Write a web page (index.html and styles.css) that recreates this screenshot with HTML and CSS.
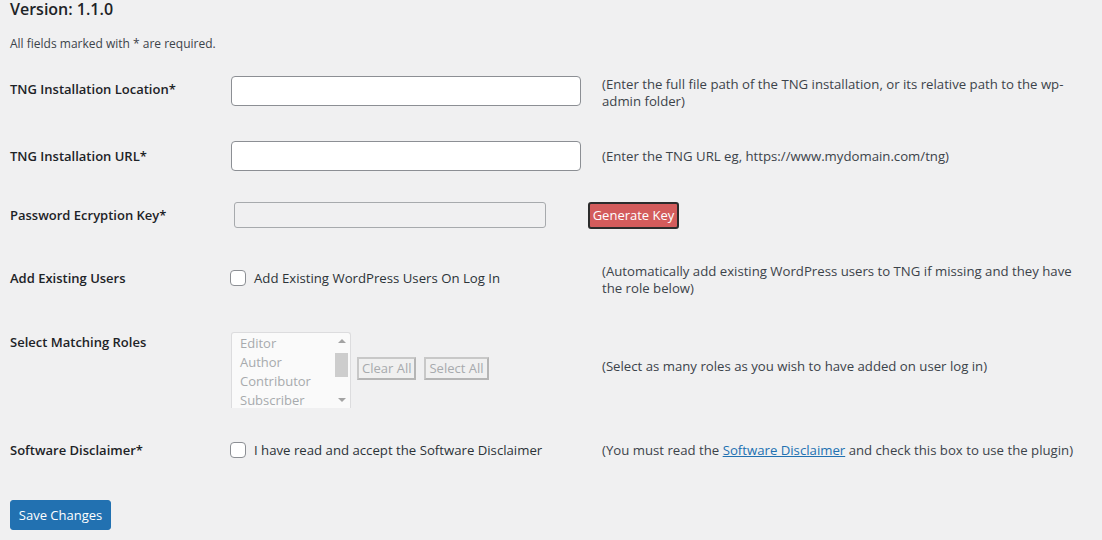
FILE: index.html
```html
<!DOCTYPE html>
<html>
<head>
<meta charset="utf-8">
<link rel="stylesheet" href="styles.css">
</head>
<body>
<div class="wrap">
  <h2 class="version">Version: 1.1.0</h2>
  <p class="required">All fields marked with * are required.</p>
  <div class="form">
    <div class="label r1">TNG Installation Location*</div>
    <div class="field"><input class="text" type="text"></div>
    <div class="desc two">(Enter the full file path of the TNG installation, or its relative path to the wp-admin folder)</div>

    <div class="label">TNG Installation URL*</div>
    <div class="field"><input class="text" type="text"></div>
    <div class="desc">(Enter the TNG URL eg, https://www.mydomain.com/tng)</div>

    <div class="label">Password Ecryption Key*</div>
    <div class="field keyfield"><input class="text key" type="text" disabled><button class="gen" type="button">Generate Key</button></div>
    <div class="desc"></div>

    <div class="label">Add Existing Users</div>
    <div class="field"><label class="check"><span class="box"></span>Add Existing WordPress Users On Log In</label></div>
    <div class="desc two">(Automatically add existing WordPress users to TNG if missing and they have the role below)</div>

    <div class="label top">Select Matching Roles</div>
    <div class="field roles">
      <div class="listbox">
        <div class="items">
          <div>Editor</div>
          <div>Author</div>
          <div>Contributor</div>
          <div>Subscriber</div>
        </div>
        <div class="scroll">
          <span class="arrow up"></span>
          <span class="thumb"></span>
          <span class="arrow down"></span>
        </div>
      </div>
      <button class="small" type="button">Clear All</button>
      <button class="small" type="button">Select All</button>
    </div>
    <div class="desc up">(Select as many roles as you wish to have added on user log in)</div>

    <div class="label">Software Disclaimer*</div>
    <div class="field"><label class="check"><span class="box"></span>I have read and accept the Software Disclaimer</label></div>
    <div class="desc">(You must read the <a href="#">Software Disclaimer</a> and check this box to use the plugin)</div>
  </div>
  <button class="save" type="button">Save Changes</button>
</div>
</body>
</html>
```

FILE: styles.css
```css
html, body {
  margin: 0;
  padding: 0;
  background: #f0f0f1;
}
body {
  font-family: "Open Sans", "Noto Sans", sans-serif;
  color: #3c434a;
  font-size: 13px;
}
.wrap {
  padding: 0 10px;
}
.version {
  margin: 0;
  font-size: 16px;
  line-height: 18px;
  font-weight: 600;
  color: #1d2327;
}
.required {
  margin: 17px 0 0;
  font-size: 12px;
  line-height: 17px;
  height: 17px;
}
.form {
  margin-top: 8px;
  display: grid;
  grid-template-columns: 221px 371px 1fr;
  grid-template-rows: 62px 68px 50px 76px 108px 52px;
  align-items: center;
}
.label {
  font-size: 13px;
  font-weight: 600;
  color: #1d2327;
  line-height: 18px;
}
.label.r1 { margin-top: -4px; }
.label.top {
  align-self: start;
  margin-top: 17px;
}
.desc {
  font-size: 13.2px;
  line-height: 17px;
  color: #3c434a;
  padding-right: 10px;
}
.desc.two { margin-top: 4px; }
.desc.up { margin-top: -8px; }
.desc a {
  color: #2271b1;
}
.text {
  box-sizing: border-box;
  width: 350px;
  height: 30px;
  border: 1px solid #8c8f94;
  border-radius: 4px;
  background: #fff;
  margin: 0;
  display: block;
}
.keyfield {
  display: flex;
  align-items: center;
  white-space: nowrap;
}
.text.key {
  flex: none;
  width: 312px;
  height: 26px;
  margin-left: 3px;
  background: #f0f0f1;
  border-color: #a7aaad;
  border-radius: 3px;
}
.gen {
  flex: none;
  margin-left: 42px;
  box-sizing: border-box;
  width: 91px;
  height: 27px;
  background: #d35c5c;
  border: 2px solid #2c2c2c;
  border-radius: 3px;
  color: #fff;
  font-family: inherit;
  font-size: 13px;
  padding: 0;
  white-space: nowrap;
}
.check {
  display: flex;
  align-items: center;
  font-size: 13.2px;
  color: #2c3338;
}
.box {
  box-sizing: border-box;
  width: 16px;
  height: 16px;
  margin-left: -1px;
  margin-right: 8px;
  border: 1px solid #8c8f94;
  border-radius: 4px;
  background: #fff;
  flex: none;
}
.roles {
  display: flex;
  align-items: center;
}
.listbox {
  box-sizing: border-box;
  width: 120px;
  height: 76px;
  border: 1px solid #dcdcde;
  border-bottom: none;
  border-radius: 3px 3px 0 0;
  background: #fafafa;
  display: flex;
  overflow: hidden;
  flex: none;
}
.items {
  flex: 1;
  padding: 1px 0 0 8px;
  color: #a7aaad;
  font-size: 13px;
  line-height: 19px;
}
.scroll {
  width: 17px;
  display: flex;
  flex-direction: column;
  align-items: center;
}
.arrow {
  width: 0;
  height: 0;
  border-left: 4px solid transparent;
  border-right: 4px solid transparent;
}
.arrow.up {
  margin-top: 6px;
  border-bottom: 4px solid #a3a3a3;
}
.arrow.down {
  margin-top: auto;
  margin-bottom: 6px;
  border-top: 4px solid #a3a3a3;
}
.thumb {
  margin-top: 10px;
  width: 13px;
  height: 24px;
  background: #cdcdcd;
}
.small {
  box-sizing: border-box;
  height: 23px;
  margin-left: 6px;
  margin-bottom: 4px;
  padding: 0 3px;
  background: #f0f0f0;
  border: 2px solid #c8c8c8;
  border-right-color: #b5b5b5;
  border-bottom-color: #b5b5b5;
  color: #a7aaad;
  font-family: inherit;
  font-size: 13px;
  white-space: nowrap;
}
.small + .small {
  margin-left: 8px;
}
.save {
  margin-top: 24px;
  box-sizing: border-box;
  width: 101px;
  height: 30px;
  background: #2271b1;
  border: 1px solid #2271b1;
  border-radius: 3px;
  color: #fff;
  font-family: inherit;
  font-size: 13px;
  padding: 0;
  display: block;
}
```
